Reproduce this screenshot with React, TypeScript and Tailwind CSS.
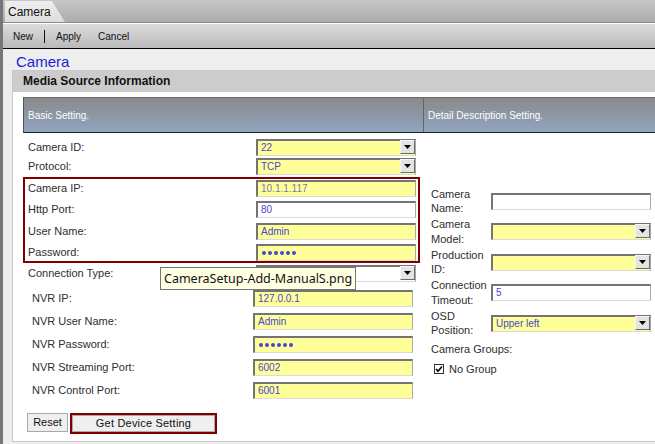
import React from 'react';

const Arrow = () => (
  <div className="absolute right-[0px] top-[-1px] w-[15px] h-[14px] bg-[#e4e4e4] border border-t-[#f6f6f6] border-l-[#f6f6f6] border-r-[#6a6a6a] border-b-[#6a6a6a] flex items-center justify-center">
    <svg width="7" height="4" viewBox="0 0 7 4">
      <path d="M0 0h7L3.5 4z" fill="#000" />
    </svg>
  </div>
);

const Dots = () => (
  <div className="h-full flex items-center gap-[2px] pl-[1px]">
    {[0, 1, 2, 3, 4, 5].map((i) => (
      <span key={i} className="block w-[4px] h-[4px] rounded-full bg-[#4646d2]" />
    ))}
  </div>
);

interface FieldProps {
  value?: string;
  yellow?: boolean;
  select?: boolean;
  muted?: boolean;
  dots?: boolean;
}

const Field: React.FC<FieldProps> = ({ value = '', yellow = true, select = false, muted = false, dots = false }) => (
  <div
    className={`relative h-[17px] w-[160px] shrink-0 ${yellow ? 'bg-[#ffff99]' : 'bg-white'} border-t-2 border-l-2 border-r border-b border-t-[#747474] border-l-[#747474] border-r-[#a9a9a9] border-b-[#dadada] pl-[3px] text-[10px] leading-[14px] ${muted ? 'text-[#7a7ab4]' : 'text-[#4646d2]'}`}
  >
    {dots ? <Dots /> : value}
    {select && <Arrow />}
  </div>
);

const Label: React.FC<{ className: string; children: React.ReactNode }> = ({ className, children }) => (
  <div className={`shrink-0 text-[11px] text-[#2e2e2e] ${className}`}>{children}</div>
);

const RightRow: React.FC<{ label: string; children: React.ReactNode }> = ({ label, children }) => (
  <div className="h-[30.5px] flex items-center">
    <Label className="w-[68px] pl-[8px] pr-[6px] leading-[14.5px]">{label}</Label>
    {children}
  </div>
);

export default function App() {
  return (
    <div className="relative w-[655px] h-[444px] overflow-hidden bg-[#eeeeee] border-l-[3px] border-l-[#767676] font-['Liberation_Sans',Arial,sans-serif] flex flex-col">
      {/* tab strip */}
      <div className="h-[23px] shrink-0 bg-linear-to-b from-[#c6c6c6] to-[#acacac] border-b border-[#8c8c8c] flex items-end pl-[2px]">
        <div className="h-[21px] w-[60px] bg-linear-to-b from-[#efefef] to-[#dddddd] [clip-path:polygon(0_0,78%_0,100%_100%,0_100%)] pl-[3px] text-[12px] leading-[22px] text-[#111]">
          Camera
        </div>
      </div>
      <div className="h-[1px] shrink-0 bg-white" />
      {/* toolbar */}
      <div className="h-[25px] shrink-0 bg-linear-to-b from-[#dcdcdc] to-[#bababa] border-b border-black flex items-center pl-[10px] text-[10px] text-[#111]">
        <span>New</span>
        <span className="ml-[11px] w-[1px] h-[13px] bg-[#111]" />
        <span className="ml-[11px]">Apply</span>
        <span className="ml-[17px]">Cancel</span>
      </div>
      {/* title */}
      <div className="h-[21px] shrink-0 pl-[13px] pt-[4px] text-[15px] leading-[17px] text-[#1c1cd6]">Camera</div>

      {/* panel */}
      <div className="ml-[9px] w-[660px] border-t border-l border-b border-[#c8c8c8] bg-white">
        <div className="h-[21px] bg-[#cccccc] pl-[10px] text-[12px] font-bold leading-[21px] text-[#111]">
          Media Source Information
        </div>
        <div className="pt-[5px] pl-[10px] pb-[7px]">
          <div className="h-[36px] w-[640px] flex bg-linear-to-b from-[#8a8a8a] to-[#8fa4bf] border-t border-t-[#6a6a6a] border-l border-l-[#555] border-b border-b-[#222] text-[10px] text-white">
            <div className="w-[400px] border-r border-[#646464] pl-[4px] flex items-center">Basic Setting.</div>
            <div className="pl-[4px] flex items-center">Detail Description Setting.</div>
          </div>

          <div className="flex">
            {/* left column */}
            <div className="w-[400px] pt-[6px] flex flex-col">
              <div className="h-[17px] flex items-center">
                <Label className="w-[233px] pl-[5px]">Camera ID:</Label>
                <Field value="22" select />
              </div>
              <div className="mt-[2px] h-[17px] flex items-center">
                <Label className="w-[233px] pl-[5px]">Protocol:</Label>
                <Field value="TCP" select />
              </div>
              <div className="mt-[2px] w-[397px] border-2 border-[#800000] pt-[0.5px] flex flex-col gap-[4.5px]">
                <div className="h-[17px] flex items-center">
                  <Label className="w-[231px] pl-[3px]">Camera IP:</Label>
                  <Field value="10.1.1.117" muted />
                </div>
                <div className="h-[17px] flex items-center">
                  <Label className="w-[231px] pl-[3px]">Http Port:</Label>
                  <Field value="80" yellow={false} />
                </div>
                <div className="h-[17px] flex items-center">
                  <Label className="w-[231px] pl-[3px]">User Name:</Label>
                  <Field value="Admin" />
                </div>
                <div className="h-[17px] flex items-center">
                  <Label className="w-[231px] pl-[3px]">Password:</Label>
                  <Field dots />
                </div>
              </div>
              <div className="mt-[2px] h-[17px] flex items-center">
                <Label className="w-[233px] pl-[5px]">Connection Type:</Label>
                <Field value="" select yellow={false} />
              </div>
              <div className="mt-[8px] flex flex-col gap-[6px]">
                {[
                  ['NVR IP:', '127.0.0.1'],
                  ['NVR User Name:', 'Admin'],
                  ['NVR Password:', ''],
                  ['NVR Streaming Port:', '6002'],
                  ['NVR Control Port:', '6001'],
                ].map(([l, v]) => (
                  <div key={l} className="h-[17px] flex items-center">
                    <Label className="w-[230px] pl-[9px]">{l}</Label>
                    <Field value={v} dots={l === 'NVR Password:'} />
                  </div>
                ))}
              </div>
              <div className="mt-[14px] ml-[4px] flex items-start">
                <button className="block w-[41px] h-[19px] bg-[#efefef] border border-[#a9a9a9] text-[11px] text-[#111] leading-[17px]">
                  Reset
                </button>
                <div className="ml-[2px] w-[147px] h-[21px] border-2 border-[#800000] flex">
                  <button className="block w-full h-full bg-[#efefef] border border-[#a9a9a9] text-[11px] text-[#111] leading-[15px] tracking-[0.2px]">
                    Get Device Setting
                  </button>
                </div>
              </div>
            </div>

            {/* right column */}
            <div className="flex-1 pt-[52.75px] flex flex-col">
              <RightRow label="Camera Name:">
                <Field value="" yellow={false} />
              </RightRow>
              <RightRow label="Camera Model:">
                <Field value="" select />
              </RightRow>
              <RightRow label="Production ID:">
                <Field value="" select />
              </RightRow>
              <RightRow label="Connection Timeout:">
                <Field value="5" yellow={false} />
              </RightRow>
              <RightRow label="OSD Position:">
                <Field value="Upper left" select />
              </RightRow>
              <Label className="mt-[3.5px] pl-[8px] leading-[14px]">Camera Groups:</Label>
              <div className="mt-[6px] h-[14px] pl-[11px] flex items-center">
                <div className="w-[10px] h-[10px] bg-white border border-[#333] flex items-center justify-center">
                  <svg width="8" height="8" viewBox="0 0 8 8">
                    <path d="M1 4l2 2.2L7 1.5" fill="none" stroke="#000" strokeWidth="1.6" />
                  </svg>
                </div>
                <span className="ml-[5px] text-[11px] text-[#2e2e2e]">No Group</span>
              </div>
            </div>
          </div>
        </div>
      </div>

      {/* tooltip */}
      <div className="absolute left-[157px] top-[267px] w-[196px] h-[23px] bg-[#ffffe1] border border-[#767676] pl-[3px] font-['Noto_Sans',sans-serif] text-[12.5px] leading-[21px] text-[#111] whitespace-nowrap">
        CameraSetup-Add-ManualS.png
      </div>
    </div>
  );
}
